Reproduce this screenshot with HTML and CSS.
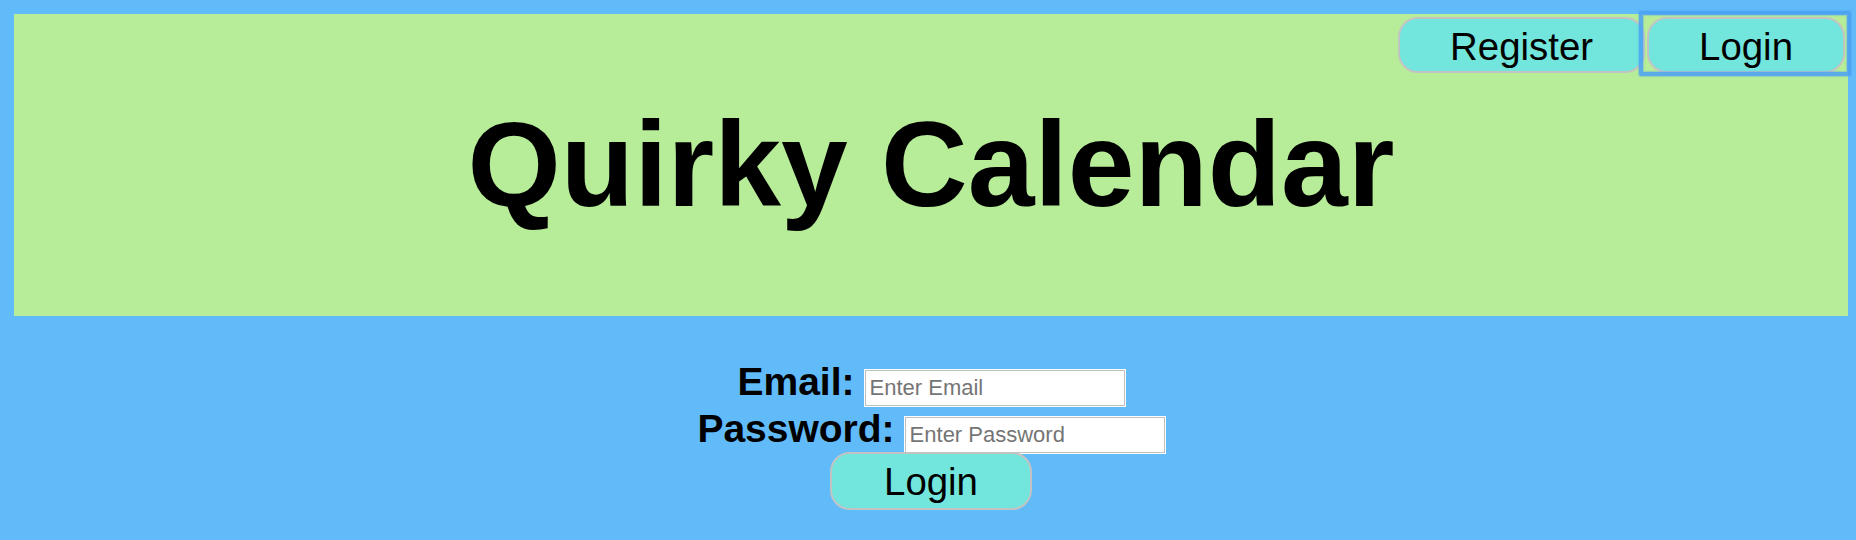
FILE: index.html
```html
<!DOCTYPE html>
<html lang="en">
<head>
<meta charset="utf-8">
<title>Quirky Calendar</title>
<link rel="stylesheet" href="styles.css">
</head>
<body>
<div class="page">
  <header class="header">
    <nav class="nav">
      <button class="btn btn-nav" type="button">Register</button>
      <button class="btn btn-nav is-focused" type="button">Login</button>
    </nav>
    <h1 class="title">Quirky Calendar</h1>
  </header>
  <form class="login-form">
    <div class="form-row">
      <label class="form-label" for="email">Email:</label>
      <input class="form-input" id="email" type="text" placeholder="Enter Email">
    </div>
    <div class="form-row">
      <label class="form-label" for="password">Password:</label>
      <input class="form-input" id="password" type="password" placeholder="Enter Password">
    </div>
    <div class="form-actions">
      <button class="btn btn-submit" type="button">Login</button>
    </div>
  </form>
</div>
</body>
</html>
```
FILE: styles.css
```css
html, body {
  margin: 0;
  padding: 0;
  background: #61bbf9;
  font-family: "Liberation Sans", Arial, Helvetica, sans-serif;
  color: #000;
}

.page {
  padding: 14px 8px 0 14px;
}

.header {
  background: #b7ec98;
  padding: 3px 3px 0 3px;
  display: flex;
  flex-direction: column;
}

.nav {
  display: flex;
  justify-content: flex-end;
  gap: 2px;
  height: 56px;
}

.btn {
  font-family: "Liberation Sans", Arial, Helvetica, sans-serif;
  font-size: 38.4px;
  line-height: 44px;
  color: #000;
  background: #72e6dc;
  border: 2px solid #c2c4c4;
  border-radius: 20px;
  margin: 0;
  cursor: pointer;
}

.btn-nav {
  height: 56px;
  padding: 6px 50px 2px;
}

.btn-nav.is-focused {
  position: relative;
}

.btn-nav.is-focused::after {
  content: "";
  position: absolute;
  top: -8px;
  right: -8px;
  bottom: -5px;
  left: -10px;
  border: 4px solid rgba(74, 160, 245, 0.85);
  border-radius: 2px;
  box-shadow: 0 0 1px 1px rgba(74, 160, 245, 0.35), inset 0 0 1px 1px rgba(74, 160, 245, 0.35);
  pointer-events: none;
}

.title {
  margin: 22px 0 83px;
  font-size: 120px;
  line-height: 138px;
  font-weight: bold;
  text-align: center;
}

.login-form {
  margin-top: 42px;
  display: flex;
  flex-direction: column;
  align-items: center;
}

.form-row {
  display: flex;
  justify-content: center;
  align-items: baseline;
  gap: 10px;
  height: 47px;
}

.form-label {
  font-size: 39px;
  font-weight: bold;
  line-height: 47px;
}

.form-input {
  box-sizing: border-box;
  width: 260px;
  height: 36px;
  margin: 0;
  padding: 0 4px;
  border: 1px solid #c0c0c0;
  box-shadow: 0 0 0 1px #fff;
  background: #fff;
  font-family: "Liberation Sans", Arial, Helvetica, sans-serif;
  font-size: 22px;
  color: #000;
}

.form-input::placeholder {
  color: #757575;
}

.form-actions {
  display: flex;
  justify-content: center;
}

.btn-submit {
  height: 58px;
  padding: 6px 52px 4px;
}
```
